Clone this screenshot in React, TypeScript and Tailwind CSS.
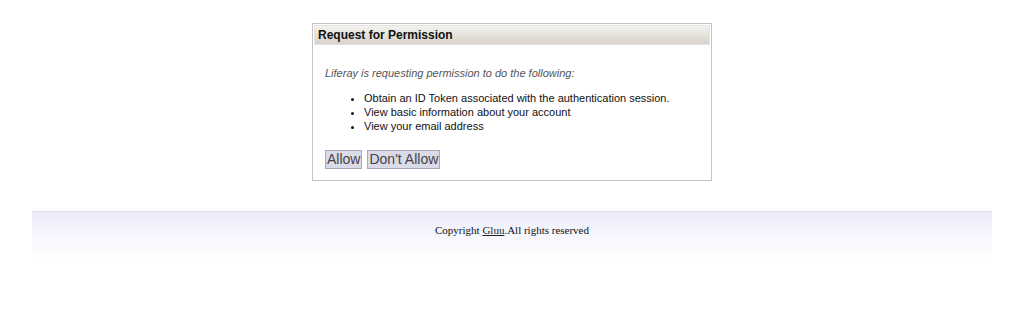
export default function App() {
  return (
    <div className="w-[1030px] h-[336px] bg-white" style={{ fontFamily: '"Liberation Sans", Arial, sans-serif' }}>
      <div className="ml-[32px] w-[960px] pt-[23px]">
        <div className="mx-auto w-[400px] border border-[#c4c4c4] p-px">
          <div className="h-[20px] flex items-center pl-[3px] bg-gradient-to-b from-[#f3f2ee] to-[#d7d3cb] border border-[#e4e2dc] text-[12px] font-bold text-[#111]">
            Request for Permission
          </div>
          <div className="pl-[11px] pt-[21px] pb-[10px] text-[11px] leading-[14px] text-[#444]">
            <p className="italic text-[#555]">Liferay is requesting permission to do the following:</p>
            <ul className="list-disc pl-[39px] mt-[11px] text-[#111]">
              <li>Obtain an ID Token associated with the authentication session.</li>
              <li>View basic information about your account</li>
              <li>View your email address</li>
            </ul>
            <div className="mt-[17px] flex gap-[5px]">
              <button className="h-[19px] px-px border border-[#a9a9bb] bg-[#dadae9] text-[14px] leading-[17px] text-[#444]">Allow</button>
              <button className="h-[19px] px-px border border-[#a9a9bb] bg-[#dadae9] text-[14px] leading-[17px] text-[#444]">Don't Allow</button>
            </div>
          </div>
        </div>
        <div className="mt-[30px] h-[46px] border-t border-[#dcdce4] bg-gradient-to-b from-[#ececfb] to-[#ffffff] flex justify-center pt-[11px] text-[11px] leading-[14px] text-[#111]" style={{ fontFamily: '"Liberation Serif", "Times New Roman", serif' }}>
          <span>Copyright <a className="underline text-[#222]">Gluu</a>.All rights reserved</span>
        </div>
      </div>
    </div>
  );
}
